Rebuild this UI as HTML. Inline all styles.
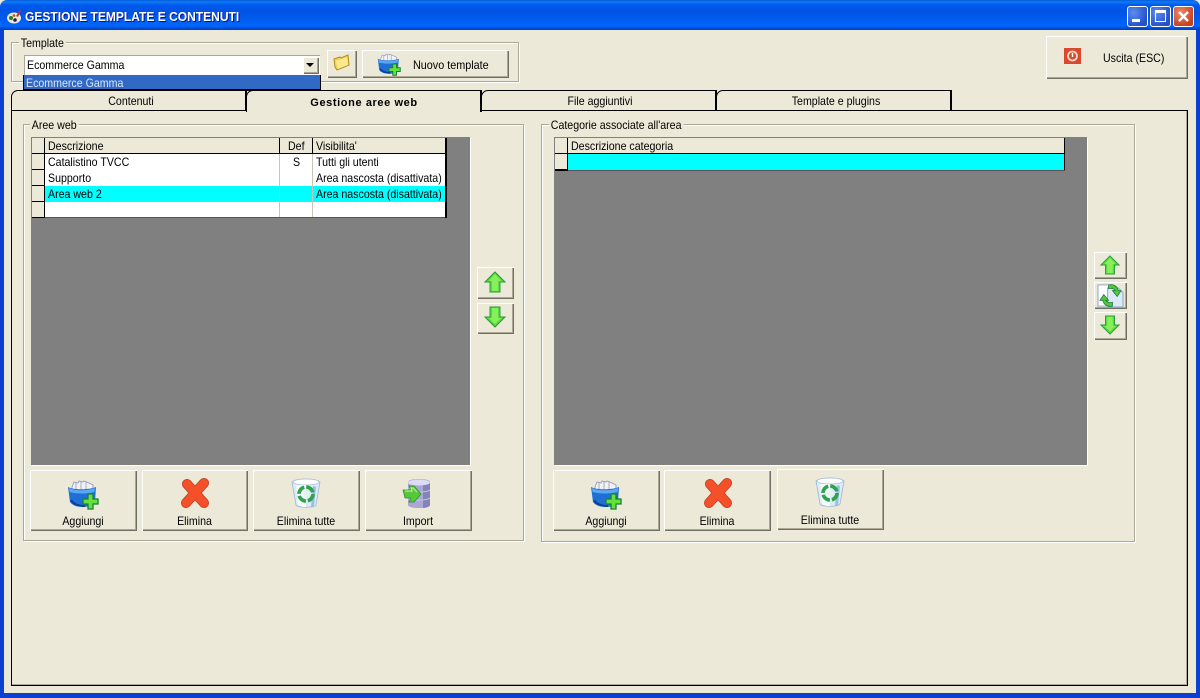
<!DOCTYPE html>
<html><head><meta charset="utf-8"><style>
html,body{margin:0;padding:0;background:#ECE9D8}
#w{position:relative;width:1200px;height:698px;overflow:hidden;background:#ECE9D8;font:12px "Liberation Sans",sans-serif;color:#000}
#w div,#w svg{position:absolute}
.t{white-space:nowrap;line-height:14px;height:14px;transform:scaleX(.885);transform-origin:0 50%;z-index:3}
.c{transform-origin:50% 50%;text-align:center}
.btn{background:#ECE9D8;box-shadow:inset 1px 1px 0 #fff,inset -1px -1px 0 #716F64,inset -2px -2px 0 #ACA899;box-sizing:border-box}
.grp{border:1px solid #ACA899;box-shadow:inset 1px 1px 0 #fff,1px 1px 0 #fff;box-sizing:border-box}
.leg{background:#ECE9D8;padding:0 2px;white-space:nowrap;line-height:14px;transform:scaleX(.885);transform-origin:0 50%}
.tab{background:#ECE9D8;box-sizing:border-box;border-top:1px solid #000;border-right:2px solid #000;border-left:1px solid #000;border-radius:7px 0 0 0}
.k{background:#000}.gl{background:#C8C5B8}
</style></head><body><div id="w">
<svg width="0" height="0" style="left:0;top:0"><defs>
<symbol id="add" viewBox="0 0 32 32">
<path d="M5 9l2-5 4 1 1-2 4 1 1-1 5 2 4 2v8H5z" fill="#f0f2f8" stroke="#8a94b0" stroke-width=".8"/>
<path d="M9 5v6M14 4v7M19 4v7" stroke="#aab" stroke-width="1"/>
<path d="M1 9c5 3 21 3 28 0l-1 15c-1 3-6 5-12 5-7 0-11-2-13-5z" fill="#1f6fd6"/>
<path d="M2 10c6 3 18 3 26 0l-.5 4c-7 2-18 2-25 0z" fill="#5ba8f0"/>
<path d="M4 22c2 4 8 6 14 6" stroke="#0c3f96" stroke-width="2" fill="none"/>
<path d="M21 16h5v5h5v5h-5v5h-5v-5h-5v-5h5z" fill="#66e03a" stroke="#16803a" stroke-width="1.3"/>
</symbol>
<symbol id="del" viewBox="0 0 30 30">
<path d="M7 6l17 19M24 5L6 25" stroke="#C03A1E" stroke-width="10" stroke-linecap="round"/>
<path d="M7 6l17 19M24 5L6 25" stroke="#F4512A" stroke-width="8.500" stroke-linecap="round"/>
</symbol>
<symbol id="bin" viewBox="0 0 30 32">
<path d="M1 5c4-4 24-4 28 0l-4 23c-2 3-18 3-20 0z" fill="#dcebfa" stroke="#9fb6d0" stroke-width=".8"/>
<ellipse cx="15" cy="5" rx="13" ry="3" fill="#fff" stroke="#a8c0dc" stroke-width=".8"/>
<path d="M5 8l2 20c3 2 6 2 8 2V8z" fill="#f5fafe"/>
<path d="M22 9l3 1-2 19-3 1z" fill="#9cbce0"/>
<circle cx="15" cy="17" r="7" fill="none" stroke="#2fa34a" stroke-width="3.6" stroke-dasharray="9 2"/>
<circle cx="15" cy="17" r="3" fill="#e6f4ea"/>
</symbol>
<symbol id="db" viewBox="0 0 30 32">
<path d="M6 4c0-4 22-4 22 0v23c0 4-22 4-22 0z" fill="#A9A7D4"/>
<path d="M21 2c3 0 7 1 7 2v23c0 1-3 3-7 3z" fill="#8583B8"/>
<ellipse cx="17" cy="4.500" rx="11" ry="3" fill="#DEDCF4"/>
<path d="M6 12c5 3 17 3 22 0M6 20c5 3 17 3 22 0" stroke="#C8C6E4" stroke-width="1" fill="none"/>
<path d="M1 12h8l-2-4h5l7 8-7 8H7l2-4H3z" fill="#56c83c" stroke="#2c8a2c" stroke-width=".7"/>
<path d="M3 13h7l-1-3h2l4 4" stroke="#b6f090" stroke-width="1.200" fill="none"/>
</symbol>
<symbol id="up" viewBox="0 0 22 22">
<path d="M11 1l10 10h-5v10H6V11H1z" fill="#5FD83C" stroke="#2a9a3a" stroke-width="1"/>
<path d="M11 3l6 7h-3v10H8V10H5z" fill="#84F05C"/>
</symbol>
<symbol id="dn" viewBox="0 0 22 22">
<path d="M6 1h10v10h5L11 21 1 11h5z" fill="#5FD83C" stroke="#2a9a3a" stroke-width="1"/>
<path d="M8 2h6v10h3l-6 6-6-6h3z" fill="#84F05C"/>
</symbol>
<symbol id="ref" viewBox="0 0 28 26">
<path d="M1 2h12l5 5v17H1z" fill="#fff" stroke="#8aa4c8" stroke-width="1"/>
<path d="M11 5h11l5 5v15H11z" fill="#dce9f8" stroke="#8aa4c8" stroke-width="1"/>
<path d="M12 2c5-1 9 1 10 6h3l-4 6-5-6h3c-1-2-4-3-7-2z" fill="#4cc83c" stroke="#1f7a38" stroke-width=".8"/>
<path d="M16 24c-5 1-9-1-10-6H3l4-6 5 6H9c1 2 4 3 7 2z" fill="#4cc83c" stroke="#1f7a38" stroke-width=".8"/>
</symbol>
</defs></svg>

<!-- window chrome -->
<div style="left:0;top:0;width:1200px;height:30px;background:linear-gradient(180deg,#0A5BD8 0,#0A7CF6 2px,#0058EE 5px,#0054E3 12px,#0060F4 22px,#0066FF 26px,#0050D8 28px,#003DC4 30px);border-radius:7px 7px 0 0"></div>
<div style="left:0;top:30px;width:4px;height:668px;background:#0B40D0"></div>
<div style="left:1196px;top:30px;width:4px;height:668px;background:#0B40D0"></div>
<div style="left:0;top:693px;width:1200px;height:5px;background:#0B40D0"></div>
<svg style="left:6px;top:9px" width="16" height="16" viewBox="0 0 16 16"><ellipse cx="8" cy="9" rx="7" ry="5.500" fill="#e8e8e0"/><circle cx="5" cy="9" r="2" fill="#2a7a2a"/><circle cx="9" cy="11" r="1.800" fill="#223"/><path d="M10 7l4-6 1 1-3 6z" fill="#d83020"/><circle cx="8" cy="6.500" r="1.300" fill="#d84020"/></svg>
<div class="t" style="left:25px;top:10px;color:#fff;font-weight:bold;font-size:13px;transform:scaleX(.925);text-shadow:1px 1px 0 #0F1089">GESTIONE TEMPLATE E CONTENUTI</div>
<!-- window buttons -->
<div style="left:1127px;top:6px;width:21px;height:21px;box-sizing:border-box;border:1px solid #fff;border-radius:3px;background:radial-gradient(circle at 30% 30%,#5d8cf0,#2450C8 75%)"></div>
<div style="left:1132px;top:19px;width:8px;height:3px;background:#fff"></div>
<div style="left:1150px;top:6px;width:21px;height:21px;box-sizing:border-box;border:1px solid #fff;border-radius:3px;background:radial-gradient(circle at 30% 30%,#5d8cf0,#2450C8 75%)"></div>
<div style="left:1155px;top:10px;width:11px;height:12px;box-sizing:border-box;border:1px solid #fff;border-top:3px solid #fff"></div>
<div style="left:1173px;top:6px;width:21px;height:21px;box-sizing:border-box;border:1px solid #fff;border-radius:3px;background:radial-gradient(circle at 35% 30%,#EE8A6A,#C8401E 75%)"></div>
<svg style="left:1173px;top:6px" width="21" height="21"><path d="M6 6l9 9M15 6l-9 9" stroke="#fff" stroke-width="2.400"/></svg>

<!-- template group -->
<div class="grp" style="left:11px;top:42px;width:508px;height:40px"></div>
<div class="leg" style="left:19px;top:36px">Template</div>
<div style="left:24px;top:55px;width:296px;height:20px;background:#fff;box-shadow:inset 1px 1px 0 #ACA899"></div>
<div class="t" style="left:27px;top:58px">Ecommerce Gamma</div>
<div class="btn" style="left:303px;top:57px;width:16px;height:17px"></div>
<svg style="left:306px;top:63px" width="9" height="5"><path d="M0 0h8L4 4z" fill="#000"/></svg>
<div style="left:23px;top:75px;width:298px;height:16px;background:#316AC5;box-sizing:border-box;border:1px solid #000;border-top:0;border-bottom:2px solid #000"></div>
<div class="t" style="left:26px;top:76px;color:#DCE6F6">Ecommerce Gamma</div>
<div class="btn" style="left:327px;top:50px;width:30px;height:28px"></div>
<svg style="left:333px;top:54px" width="17" height="17" viewBox="0 0 17 17"><path d="M1 5l6-2 1 1 7-3 1 10-12 5-2-3z" fill="#F6D45A" stroke="#B08E20" stroke-width="1"/><path d="M3 7l11-4 1 8-10 4z" fill="#FFE98C"/></svg>
<div class="btn" style="left:362px;top:50px;width:147px;height:28px"></div>
<svg style="left:377px;top:52px" width="24" height="24"><use href="#add"/></svg>
<div class="t" style="left:413px;top:58px;transform:scaleX(.9)">Nuovo template</div>
<!-- exit -->
<div class="btn" style="left:1046px;top:36px;width:142px;height:43px"></div>
<div style="left:1064px;top:48px;width:17px;height:16px;background:#D8492E"></div>
<svg style="left:1064px;top:48px" width="17" height="16"><circle cx="8.500" cy="8" r="4.500" fill="none" stroke="#FBD8C8" stroke-width="1.800"/><path d="M8.500 5v4" stroke="#fff" stroke-width="1.500"/></svg>
<div class="t" style="left:1103px;top:51px">Uscita (ESC)</div>

<!-- tab page -->
<div style="left:11px;top:110px;width:1177px;height:576px;background:#ECE9D8;box-sizing:border-box;border:1px solid #000"></div>
<div style="left:12px;top:684px;width:1175px;height:1px;background:#ACA899"></div>
<div style="left:1186px;top:111px;width:1px;height:574px;background:#ACA899"></div>
<div class="tab" style="left:11px;top:90px;width:236px;height:21px;border-bottom:1px solid #000"></div>
<div class="tab" style="left:481px;top:90px;width:236px;height:21px;border-bottom:1px solid #000"></div>
<div class="tab" style="left:716px;top:90px;width:236px;height:21px;border-bottom:1px solid #000"></div>
<div class="tab" style="left:246px;top:90px;width:236px;height:22px;z-index:2"></div>
<div class="t c" style="left:31px;top:94px;width:200px">Contenuti</div>
<div class="t c" style="left:264px;top:96px;width:200px;font-weight:bold;letter-spacing:.6px;transform:none;font-size:11px">Gestione aree web</div>
<div class="t c" style="left:500px;top:94px;width:200px">File aggiuntivi</div>
<div class="t c" style="left:736px;top:94px;width:200px">Template e plugins</div>

<!-- group aree web -->
<div class="grp" style="left:23px;top:124px;width:501px;height:417px"></div>
<div class="leg" style="left:30px;top:118px">Aree web</div>
<div style="left:31px;top:137px;width:439px;height:328px;background:#808080;box-shadow:1px 1px 0 #fff"></div>
<div style="left:32px;top:138px;width:414px;height:80px;background:#fff"></div>
<div style="left:32px;top:138px;width:414px;height:15px;background:#ECE9D8"></div>
<div style="left:32px;top:154px;width:12px;height:63px;background:#ECE9D8"></div>
<div style="left:45px;top:186px;width:400px;height:16px;background:#00FFFF"></div>
<div class="k" style="left:32px;top:153px;width:414px;height:1px"></div>
<div class="k" style="left:44px;top:138px;width:1px;height:80px"></div>
<div class="k" style="left:32px;top:169px;width:12px;height:1px"></div>
<div class="k" style="left:32px;top:185px;width:12px;height:1px"></div>
<div class="k" style="left:32px;top:201px;width:12px;height:1px"></div>
<div class="k" style="left:32px;top:217px;width:12px;height:1px"></div>
<div style="left:45px;top:217px;width:401px;height:1px;background:#555"></div>
<div class="k" style="left:445px;top:138px;width:2px;height:80px"></div>
<div class="k" style="left:279px;top:138px;width:1px;height:15px"></div>
<div class="k" style="left:312px;top:138px;width:1px;height:15px"></div>
<div class="gl" style="left:279px;top:154px;width:1px;height:63px"></div>
<div class="gl" style="left:312px;top:154px;width:1px;height:63px"></div>
<div class="t" style="left:48px;top:139px">Descrizione</div>
<div class="t" style="left:288px;top:139px">Def</div>
<div class="t" style="left:316px;top:139px">Visibilita'</div>
<div class="t" style="left:48px;top:155px">Catalistino TVCC</div>
<div class="t" style="left:293px;top:155px">S</div>
<div class="t" style="left:316px;top:155px">Tutti gli utenti</div>
<div class="t" style="left:48px;top:171px">Supporto</div>
<div class="t" style="left:316px;top:171px">Area nascosta (disattivata)</div>
<div class="t" style="left:48px;top:187px">Area web 2</div>
<div class="t" style="left:316px;top:187px">Area nascosta (disattivata)</div>

<div class="k" style="left:513px;top:281px;width:1px;height:6px"></div>
<div style="left:513px;top:304px;width:1px;height:17px;background:#5A6A90"></div>
<div class="btn" style="left:477px;top:267px;width:37px;height:32px"></div>
<svg style="left:484px;top:271px" width="22" height="22"><use href="#up"/></svg>
<div class="btn" style="left:477px;top:303px;width:37px;height:31px"></div>
<svg style="left:484px;top:306px" width="22" height="22"><use href="#dn"/></svg>

<div class="btn" style="left:30px;top:470px;width:107px;height:61px"></div>
<svg style="left:67px;top:478px" width="32" height="32"><use href="#add"/></svg>
<div class="t c" style="left:30px;top:514px;width:106px">Aggiungi</div>
<div class="btn" style="left:142px;top:470px;width:106px;height:61px"></div>
<svg style="left:180px;top:478px" width="30" height="30"><use href="#del"/></svg>
<div class="t c" style="left:142px;top:514px;width:105px">Elimina</div>
<div class="btn" style="left:253px;top:470px;width:107px;height:61px"></div>
<svg style="left:291px;top:477px" width="30" height="32"><use href="#bin"/></svg>
<div class="t c" style="left:253px;top:514px;width:106px">Elimina tutte</div>
<div class="btn" style="left:365px;top:470px;width:107px;height:61px"></div>
<svg style="left:402px;top:478px" width="30" height="32"><use href="#db"/></svg>
<div class="t c" style="left:365px;top:514px;width:106px">Import</div>

<!-- group categorie -->
<div class="grp" style="left:541px;top:124px;width:594px;height:418px"></div>
<div class="leg" style="left:549px;top:118px">Categorie associate all'area</div>
<div style="left:554px;top:137px;width:533px;height:328px;background:#808080;box-shadow:1px 1px 0 #fff"></div>
<div style="left:555px;top:138px;width:509px;height:15px;background:#ECE9D8"></div>
<div style="left:555px;top:154px;width:12px;height:15px;background:#ECE9D8"></div>
<div style="left:568px;top:154px;width:496px;height:16px;background:#00FFFF"></div>
<div class="k" style="left:555px;top:153px;width:509px;height:1px"></div>
<div class="k" style="left:567px;top:138px;width:1px;height:32px"></div>
<div class="k" style="left:555px;top:169px;width:13px;height:2px"></div>
<div class="k" style="left:1064px;top:138px;width:1px;height:33px"></div>
<div class="k" style="left:568px;top:170px;width:497px;height:1px;background:#555"></div>
<div class="t" style="left:571px;top:139px">Descrizione categoria</div>

<div class="btn" style="left:1094px;top:252px;width:33px;height:27px"></div>
<svg style="left:1100px;top:255px" width="20" height="20"><use href="#up"/></svg>
<div class="btn" style="left:1094px;top:282px;width:33px;height:27px"></div>
<svg style="left:1097px;top:283px" width="27" height="25"><use href="#ref"/></svg>
<div class="btn" style="left:1094px;top:312px;width:33px;height:28px"></div>
<svg style="left:1100px;top:315px" width="20" height="20"><use href="#dn"/></svg>

<div class="btn" style="left:553px;top:470px;width:107px;height:61px"></div>
<svg style="left:590px;top:478px" width="32" height="32"><use href="#add"/></svg>
<div class="t c" style="left:553px;top:514px;width:106px">Aggiungi</div>
<div class="btn" style="left:664px;top:470px;width:107px;height:61px"></div>
<svg style="left:703px;top:478px" width="30" height="30"><use href="#del"/></svg>
<div class="t c" style="left:664px;top:514px;width:106px">Elimina</div>
<div class="btn" style="left:777px;top:469px;width:107px;height:61px"></div>
<svg style="left:815px;top:476px" width="30" height="32"><use href="#bin"/></svg>
<div class="t c" style="left:777px;top:513px;width:106px">Elimina tutte</div>
</div></body></html>
